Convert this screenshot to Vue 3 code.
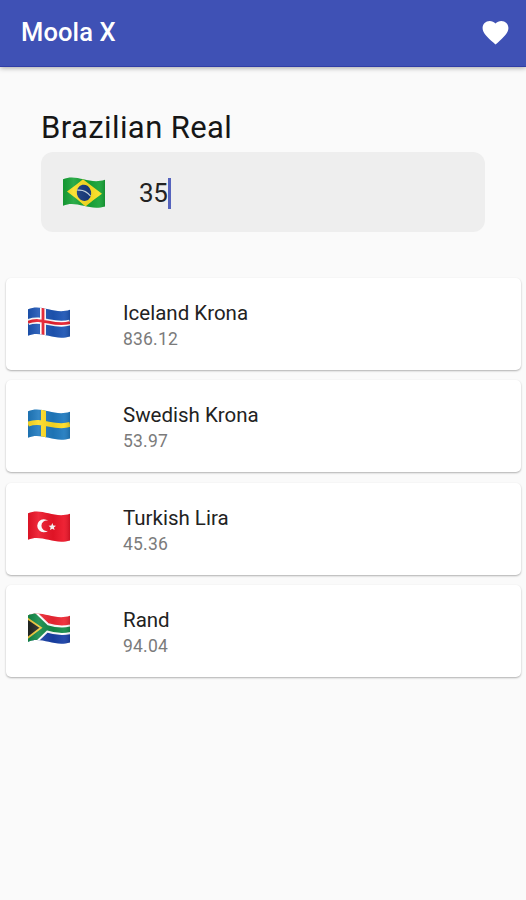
<script setup>
    import {ref} from 'vue';

    const amount = ref('35');

    const currencies = [
        {name: 'Iceland Krona', value: '836.12', flag: 'iceland'},
        {name: 'Swedish Krona', value: '53.97', flag: 'sweden'},
        {name: 'Turkish Lira', value: '45.36', flag: 'turkey'},
        {name: 'Rand', value: '94.04', flag: 'africa'},
    ];
</script>

<template>
    <header class="app_bar">
        <h1 class="title">Moola X</h1>
        <svg class="heart" viewBox="0 0 24 24">
            <path d="M12 21.35l-1.45-1.32C5.4 15.36 2 12.28 2 8.5 2 5.42 4.42 3 7.5 3c1.74 0 3.41.81 4.5 2.09C13.09 3.81 14.76 3 16.5 3 19.58 3 22 5.42 22 8.5c0 3.78-3.4 6.86-8.55 11.54L12 21.35z"/>
        </svg>
    </header>

    <main>
        <section class="base">
            <h2 class="base_name">Brazilian Real</h2>
            <div class="base_field">
                <svg class="flag" viewBox="0 0 42 32">
                    <defs>
                        <clipPath id="wave">
                            <path d="M0 2.3C14-3.5 26 8 42 2.8V29.5C26 34.5 14 23 0 28.8Z"/>
                        </clipPath>
                        <linearGradient id="fold">
                            <stop offset="0" stop-color="#000" stop-opacity=".08"/>
                            <stop offset=".25" stop-color="#fff" stop-opacity=".1"/>
                            <stop offset=".6" stop-color="#000" stop-opacity=".06"/>
                            <stop offset=".85" stop-color="#fff" stop-opacity=".06"/>
                            <stop offset="1" stop-color="#000" stop-opacity=".14"/>
                        </linearGradient>
                    </defs>
                    <g clip-path="url(#wave)">
                        <path fill="#16a336" d="M0 0h42v32H0z"/>
                        <path fill="#fbdf22" d="M4 14.5Q13 8 20 2.2 30 10 39 16.7 30 23 22.5 29.5 13 21 4 14.5z"/>
                        <ellipse cx="21" cy="15.8" rx="7.2" ry="8.2" fill="#173b7e" transform="rotate(-12 21 15.8)"/>
                        <path d="M14.3 13.2Q22 12 27.5 19" fill="none" stroke="#c9d8e6" stroke-width="1.2"/>
                        <path fill="url(#fold)" d="M0 0h42v32H0z"/>
                    </g>
                </svg>
                <span class="amount">{{amount}}</span>
                <span class="cursor"></span>
            </div>
        </section>

        <ul class="list">
            <li v-for="currency in currencies" :key="currency.name" class="card">
                <svg class="flag" viewBox="0 0 42 32">
                    <g clip-path="url(#wave)">
                        <template v-if="currency.flag === 'iceland'">
                            <path fill="#1d55b5" d="M0 0h42v32H0z"/>
                            <path class="cross" stroke="#fff" stroke-width="6" d="M15 0V32M0 15.2C14 9.5 26 20.5 42 15.5"/>
                            <path class="cross" stroke="#e8202f" stroke-width="2.8" d="M15 0V32M0 15.2C14 9.5 26 20.5 42 15.5"/>
                        </template>
                        <template v-else-if="currency.flag === 'sweden'">
                            <path fill="#1f7abf" d="M0 0h42v32H0z"/>
                            <path class="cross" stroke="#ffdc22" stroke-width="5" d="M15.5 0V32M0 15.2C14 9.5 26 20.5 42 15.5"/>
                        </template>
                        <template v-else-if="currency.flag === 'turkey'">
                            <path fill="#ed1528" d="M0 0h42v32H0z"/>
                            <path fill="#fff" d="M20.2 9.8A6.6 6.6 0 1 0 20.2 19.7 5.2 5.2 0 1 1 20.2 9.8z"/>
                            <path fill="#fff" d="M24.3 12l1 2.5 2.7.2-2.1 1.8.7 2.6-2.3-1.4-2.3 1.4.6-2.6-2-1.8 2.7-.2z"/>
                        </template>
                        <template v-else>
                            <path fill="#ee2733" d="M0 0h42v16H0z"/>
                            <path fill="#173fa5" d="M0 16h42v16H0z"/>
                            <path class="cross" stroke="#fff" stroke-width="9.5" d="M1-2L18 14.5C26 17 34 18.5 43 16M1 31L18 14.5"/>
                            <path fill="#138a48" d="M0 0L18 14.5 0 29z"/>
                            <path class="cross" stroke="#138a48" stroke-width="5.5" d="M1-2L18 14.5C26 17 34 18.5 43 16M1 31L18 14.5"/>
                            <path fill="#222723" stroke="#edc83c" stroke-width="1.8" d="M-2 4.5L13 14.8-2 26z"/>
                        </template>
                        <path fill="url(#fold)" d="M0 0h42v32H0z"/>
                    </g>
                </svg>
                <div class="details">
                    <p class="name">{{currency.name}}</p>
                    <p class="value">{{currency.value}}</p>
                </div>
            </li>
        </ul>
    </main>
</template>

<style>
    body{
        background: #fafafa;
        font-family: Roboto, sans-serif;
    }
</style>

<style scoped>
    h1, h2, p, ul{
        margin: 0;
        padding: 0;
        font-weight: 400;
    }

    .app_bar{
        display: flex;
        align-items: center;
        justify-content: space-between;
        box-sizing: border-box;
        height: 67px;
        padding: 0 15px 2px 21px;
        background: #3f51b5;
        border-bottom: 1px solid #303da6;
        box-shadow: 0 1px 5px rgba(0, 0, 0, .35);
    }

    .title{
        color: white;
        font-size: 25.5px;
        font-weight: 500;
        letter-spacing: .1px;
    }

    .heart{
        width: 31px;
        height: 31px;
        fill: white;
    }

    .base{
        padding: 41px 41px 0;
    }

    .base_name{
        font-size: 31px;
        line-height: 40px;
        letter-spacing: .4px;
        color: #161616;
    }

    .base_field{
        display: flex;
        align-items: center;
        box-sizing: border-box;
        height: 80px;
        margin-top: 4px;
        padding: 2px 22px 0;
        border-radius: 12px;
        background: #eee;
    }

    .flag{
        flex: none;
        width: 42px;
        height: 32px;
    }

    .cross{
        fill: none;
    }

    .amount{
        margin-left: 34px;
        font-size: 26px;
        letter-spacing: -.3px;
        color: #222;
    }

    .cursor{
        width: 3px;
        height: 31px;
        background: #5563bd;
    }

    .list{
        display: grid;
        gap: 10.3px;
        padding: 46px 5px 8px 6px;
        list-style: none;
    }

    .card{
        display: flex;
        align-items: center;
        box-sizing: border-box;
        height: 92px;
        padding: 0 22px 3px;
        border-radius: 5px;
        background: white;
        box-shadow: 0 1px 2px rgba(0, 0, 0, .3);
    }

    .details{
        margin: 7px 0 0 53px;
    }

    .name{
        font-size: 20.5px;
        line-height: 27px;
        color: #222;
    }

    .value{
        font-size: 17.5px;
        line-height: 25px;
        letter-spacing: .2px;
        color: #7b7b7b;
    }
</style>
